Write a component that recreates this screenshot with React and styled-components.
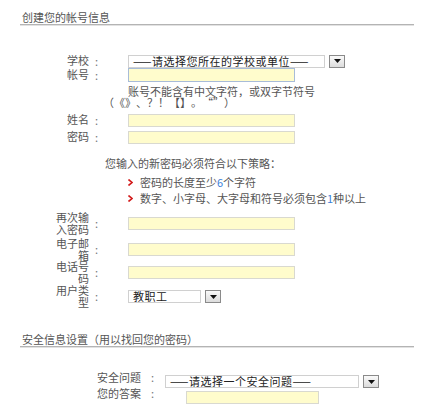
import React from 'react'
import styled, { createGlobalStyle } from 'styled-components'

const Global = createGlobalStyle`
    html, body{
        margin: 0;
        background: #fff;
    }
    body{
        font-family: "Noto Sans CJK SC", "Noto Sans", sans-serif;
        font-size: 11px;
        color: #555;
        text-spacing-trim: space-all;
        text-autospace: no-autospace;
    }
`

const Page = styled.div`
    width: 394px;
    padding: 10px 10px 0 20px;
`

const SectionTitle = styled.div`
    line-height: 14px;
    height: 14px;
    padding-left: 2px;
    margin-top: ${({$mt}) => $mt || 0}px;
    border-bottom: 1px solid #b4b4b4;
    box-shadow: 0 1px 0 #e2e2e2;
    color: #555;
`

const Form = styled.div`
    display: flex;
    flex-direction: column;
    padding-top: ${({$pt}) => $pt}px;
`

const Row = styled.div`
    display: flex;
    align-items: center;
    height: ${({$h}) => $h || 14}px;
    margin-top: ${({$mt}) => $mt || 0}px;
`

const Label = styled.div`
    width: ${({$w}) => $w || 69}px;
    text-align: right;
    line-height: 11.5px;
    padding-bottom: ${({$lift}) => $lift || 0}px;
    color: #555;
`

const Colon = styled.div`
    width: ${({$w}) => $w || 39}px;
    box-sizing: border-box;
    padding-left: ${({$pl}) => $pl || 6}px;
    padding-bottom: ${({$lift}) => $lift || 0}px;
    line-height: 11px;
    color: #777;
`

const Input = styled.div`
    box-sizing: border-box;
    width: ${({$w}) => $w || 167}px;
    height: ${({$h}) => $h || 13}px;
    margin-left: ${({$ml}) => $ml || 0}px;
    background: #fffccc;
    border: 1px solid ${({$focus}) => $focus ? '#a8bcd8' : '#d9d9d0'};
`

const Select = styled.div`
    display: flex;
    align-items: center;
    width: ${({$w}) => $w}px;
    height: 13px;
`

const SelectText = styled.div`
    flex: 1;
    box-sizing: border-box;
    height: 13px;
    line-height: 11px;
    padding-left: 4px;
    border: 1px solid #d0d0d0;
    background: #fff;
    color: #222;
    letter-spacing: 0.5px;
    white-space: nowrap;
`

const SelectBtn = styled.div`
    box-sizing: border-box;
    width: 16px;
    height: 13px;
    margin-left: 4px;
    border: 1px solid #8a8a8a;
    background: linear-gradient(#fafafa, #dcdcdc);
    display: flex;
    align-items: center;
    justify-content: center;
`

const Hint = styled.div`
    line-height: 11px;
    padding-left: ${({$pl}) => $pl}px;
    margin-top: ${({$mt}) => $mt || 0}px;
    color: #555;
    white-space: nowrap;
`

const Policy = styled.div`
    line-height: 14px;
    height: 14px;
    margin-top: ${({$mt}) => $mt || 0}px;
    padding-left: ${({$pl}) => $pl || 0}px;
    display: flex;
    align-items: center;
    color: #555;
`

const Mark = styled.svg`
    width: 5px;
    height: 7px;
    margin-right: 7px;
`

const Num = styled.span`
    color: #3a80d8;
`

const Arrow = () => (
    <svg width="7" height="4" viewBox="0 0 7 4"><path d="M0 0h7L3.5 4z" fill="#111" /></svg>
)

const Bullet = () => (
    <Mark viewBox="0 0 5 7"><path d="M0.5 0.5L4 3.5L0.5 6.5" fill="none" stroke="#d21a1a" strokeWidth="1.6" /></Mark>
)

const SelectBox = ({w, children}) => (
    <Select $w={w}>
        <SelectText>{children}</SelectText>
        <SelectBtn><Arrow /></SelectBtn>
    </Select>
)

const App = () => {
    return (
        <Page>
            <Global />
            <SectionTitle>创建您的帐号信息</SectionTitle>
            <Form $pt={29}>
                <Row $h={14}>
                    <Label>学校</Label><Colon>:</Colon>
                    <SelectBox w={217}>——请选择您所在的学校或单位——</SelectBox>
                </Row>
                <Row $h={14}>
                    <Label>帐号</Label><Colon>:</Colon>
                    <Input $h={14} $focus />
                </Row>
                <Hint $pl={108} $mt={4}>账号不能含有中文字符，或双字节符号</Hint>
                <Hint $pl={83}>（《》、？！【】。“”）</Hint>
                <Row $h={16} $mt={4}>
                    <Label>姓名</Label><Colon>:</Colon>
                    <Input />
                </Row>
                <Row $h={16} $mt={1}>
                    <Label>密码</Label><Colon>:</Colon>
                    <Input />
                </Row>
                <Policy $mt={11} $pl={85}>您输入的新密码必须符合以下策略：</Policy>
                <Policy $mt={5} $pl={108}><Bullet />密码的长度至少<Num>6</Num>个字符</Policy>
                <Policy $mt={2} $pl={108}><Bullet />数字、小字母、大字母和符号必须包含<Num>1</Num>种以上</Policy>
                <Row $h={23} $mt={7}>
                    <Label>再次输<br />入密码</Label><Colon>:</Colon>
                    <Input />
                </Row>
                <Row $h={23} $mt={3}>
                    <Label>电子邮<br />箱</Label><Colon>:</Colon>
                    <Input />
                </Row>
                <Row $h={23} $mt={0}>
                    <Label>电话号<br />码</Label><Colon>:</Colon>
                    <Input />
                </Row>
                <Row $h={23} $mt={1}>
                    <Label>用户类<br />型</Label><Colon>:</Colon>
                    <SelectBox w={93}>教职工</SelectBox>
                </Row>
            </Form>
            <SectionTitle $mt={24}>安全信息设置（用以找回您的密码）</SectionTitle>
            <Form $pt={28}>
                <Row $h={13}>
                    <Label $w={121} $lift={8}>安全问题</Label><Colon $w={24} $pl={10} $lift={8}>:</Colon>
                    <SelectBox w={214}>——请选择一个安全问题——</SelectBox>
                </Row>
                <Row $h={13} $mt={3}>
                    <Label $w={121} $lift={8}>您的答案</Label><Colon $w={24} $pl={10} $lift={8}>:</Colon>
                    <Input $w={133} $ml={21} />
                </Row>
            </Form>
        </Page>
    )
}

export default App
